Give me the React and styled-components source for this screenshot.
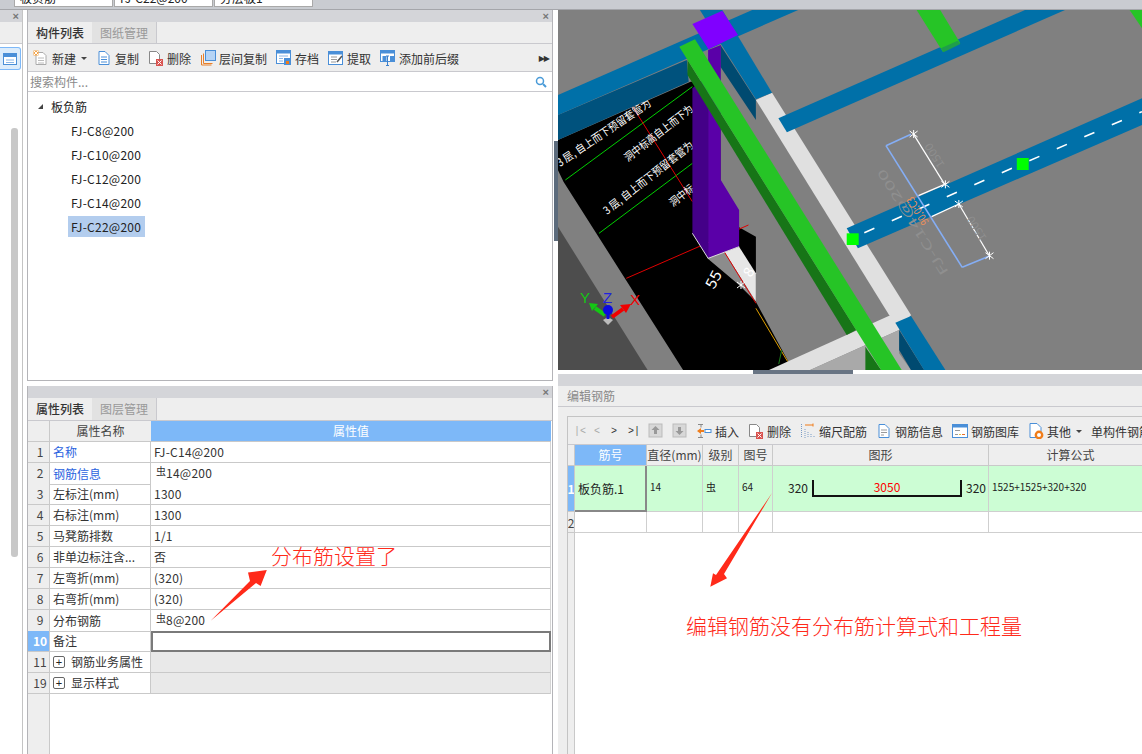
import React from "react";
import styled, { createGlobalStyle } from "styled-components";

const GlobalStyle = createGlobalStyle`
  html, body { margin: 0; padding: 0; background: #fff; }
  * { box-sizing: border-box; }
  body { font: 12px "Noto Sans CJK SC", "Liberation Sans", sans-serif; color: #222; }
`;

const Page = styled.div`
  position: relative;
  width: 1142px;
  height: 754px;
  overflow: hidden;
  display: flex;
  flex-direction: column;
`;

const TopBar = styled.div`
  height: 10px;
  flex: none;
  display: flex;
  gap: 1px;
  padding-left: 14px;
  background: #c9ccd1;
  border-bottom: 1px solid #a4a6aa;
`;
const TopCell = styled.div`
  width: 99px;
  height: 7px;
  background: #fff;
  border: 1px solid #a9a9a9;
  border-top: 0;
  padding-left: 5px;
  overflow: hidden;
  line-height: 1;
  font-size: 12px;
  > span { display: block; margin-top: -8px; }
`;

const Main = styled.div`
  flex: 1;
  min-height: 0;
  display: flex;
`;

const LeftStrip = styled.div`
  width: 23px;
  flex: none;
  border-right: 1px solid #c4c4c4;
  display: flex;
  flex-direction: column;
`;
const StripTools = styled.div`
  height: 22px;
  flex: none;
  background: #eee;
  border-bottom: 1px solid #c9c9ce;
`;
const StripButton = styled.div`
  width: 21px;
  height: 23px;
  margin-top: 3px;
  background: #dcecfb;
  border: 1px solid #7db8f8;
  border-left: 0;
  border-radius: 0 3px 3px 0;
  display: flex;
  align-items: center;
  justify-content: center;
`;
const StripThumb = styled.div`
  width: 7px;
  height: 429px;
  margin: 58px 0 0 11px;
  background: #c8c8c8;
  border-radius: 3px;
`;

const LeftColumn = styled.div`
  width: 526px;
  flex: none;
  margin-left: 4px;
  display: flex;
  flex-direction: column;
  gap: 5px;
`;
const Panel = styled.section`
  border: 1px solid #b4b4b8;
  border-top: 0;
  border-bottom: ${(p) => (p.$height ? "1px solid #b4b4b8" : "0")};
  display: flex;
  flex-direction: column;
  height: ${(p) => p.$height || "auto"};
  flex: ${(p) => (p.$height ? "none" : 1)};
  min-height: 0;
`;
const PanelHead = styled.div`
  height: 12px;
  flex: none;
  background: #d4d5d9;
  display: flex;
  align-items: center;
  justify-content: flex-end;
  padding-right: 3px;
  color: #777;
  font: bold 11px/12px "Liberation Sans", sans-serif;
`;
const Tabs = styled.div`
  height: ${(p) => p.$height || 22}px;
  flex: none;
  display: flex;
  background: #eee;
  border-bottom: 1px solid #c9c9ce;
`;
const Tab = styled.div`
  width: ${(p) => (p.$active ? 64 : 65)}px;
  text-align: center;
  line-height: 22px;
  color: ${(p) => (p.$active ? "#333" : "#999")};
  font-weight: ${(p) => (p.$active ? 500 : 400)};
  background: ${(p) => (p.$active ? "#eee" : "#e2e2e2")};
  border-right: ${(p) => (p.$active ? "0" : "1px solid #c9c9ce")};
`;

const Toolbar = styled.div`
  flex: none;
  height: ${(p) => p.$height}px;
  padding: 1px 0 0 ${(p) => p.$pad}px;
  background: #eee;
  display: flex;
  align-items: center;
  gap: ${(p) => p.$gap}px;
  white-space: nowrap;
  overflow: hidden;
  border-bottom: 1px solid #c9c9ce;
  > svg { flex: none; }
`;
const ToolItem = styled.div`
  display: flex;
  align-items: center;
  gap: 3px;
  flex: none;
  color: #333;
`;
const Caret = styled.i`
  width: 0;
  height: 0;
  margin-left: 2px;
  border: 3px solid transparent;
  border-top: 3px solid #444;
  border-bottom: 0;
`;
const More = styled.div`
  margin-left: auto;
  margin-right: 3px;
  font: 8px "DejaVu Sans", sans-serif;
  color: #333;
  letter-spacing: -1px;
`;

const Search = styled.div`
  height: 20px;
  flex: none;
  display: flex;
  align-items: center;
  justify-content: space-between;
  padding: 0 5px 0 2px;
  color: #8a8a8a;
  border-bottom: 1px solid #c9c9ce;
`;
const Tree = styled.div`
  flex: 1;
  padding-top: 2px;
  background: #fff;
`;
const TreeRoot = styled.div`
  height: 24px;
  display: flex;
  align-items: center;
  gap: 8px;
  padding-left: 10px;
  color: #222;
`;
const TreeArrow = styled.i`
  width: 0;
  height: 0;
  border-left: 5px solid transparent;
  border-bottom: 5px solid #444;
`;
const TreeItem = styled.div`
  height: 24px;
  padding-left: 40px;
  display: flex;
  align-items: center;
  > span {
    padding: 2px 4px 2px 3px;
    line-height: 17px;
    letter-spacing: 0.25px;
    background: ${(p) => (p.$selected ? "#b3cdee" : "transparent")};
  }
`;

const PropTable = styled.div`
  flex: 1;
  min-height: 0;
  display: flex;
  flex-direction: column;
  background: #fff;
`;
const PropRow = styled.div`
  display: grid;
  grid-template-columns: 22px 101px 400px;
  height: 21px;
  flex: none;
`;
const Num = styled.div`
  background: ${(p) => (p.$active ? "#7db8f8" : "#eee")};
  color: ${(p) => (p.$active ? "#fff" : "#444")};
  font-weight: ${(p) => (p.$active ? 700 : 400)};
  border-right: 1px solid #c9c9c9;
  border-bottom: 1px solid #c9c9c9;
  text-align: center;
  line-height: 20px;
  padding-left: 3px;
`;
const HeadCell = styled.div`
  text-align: center;
  line-height: 20px;
  background: ${(p) => (p.$blue ? "#7db8f8" : "#eee")};
  color: ${(p) => (p.$blue ? "#fff" : "#444")};
  border-bottom: 1px solid #c9c9c9;
`;
const NameCell = styled.div`
  padding-left: 3px;
  line-height: 20px;
  color: ${(p) => (p.$link ? "#2a63e0" : "#333")};
  border-right: 1px solid #c9c9c9;
  border-bottom: 1px solid #c9c9c9;
  white-space: nowrap;
  overflow: hidden;
  display: flex;
  align-items: center;
  gap: 6px;
`;
const ValueCell = styled.div`
  padding-left: 3px;
  line-height: 20px;
  letter-spacing: 0.25px;
  color: #333;
  border-right: 1px solid #d4d4d4;
  border-bottom: 1px solid #c9c9c9;
  background: ${(p) => (p.$group ? "#e9e9e9" : "#fff")};
  ${(p) => p.$current && "border: 2px solid #7a7a7a;"}
`;
const Expand = styled.i`
  width: 12px;
  height: 12px;
  flex: none;
  border: 1px solid #666;
  border-radius: 2px;
  font: normal 11px/10px "Liberation Sans", sans-serif;
  text-align: center;
  color: #222;
`;
const Grade = styled.span`
  font-size: 10px;
  position: relative;
  top: -3px;
  margin: 0 0 0 2px;
  letter-spacing: 0;
`;
const TableRest = styled.div`
  flex: 1;
  width: ${(p) => p.$width}px;
  background: #eee;
  border-right: 1px solid #c9c9c9;
`;

const RightColumn = styled.div`
  flex: 1;
  min-width: 0;
  margin-left: 5px;
  display: flex;
  flex-direction: column;
  position: relative;
`;
const Scene = styled.svg`
  display: block;
  flex: none;
  width: 584px;
  height: 360px;
  background: #808080;
`;
const VSplitHandle = styled.div`
  position: absolute;
  left: -4px;
  top: 131px;
  width: 4px;
  height: 100px;
  background: #5c6b7c;
`;
const HSplit = styled.div`
  height: 4px;
  flex: none;
  display: flex;
  justify-content: center;
  padding-right: 94px;
  background: #fff;
`;
const HSplitHandle = styled.div`
  width: 100px;
  background: #687484;
`;
const EditPanel = styled.section`
  flex: 1;
  min-height: 0;
  display: flex;
  flex-direction: column;
  background: #eee;
`;
const EditHead = styled.div`
  height: 12px;
  flex: none;
  background: #d4d5d9;
`;
const EditTitle = styled.div`
  height: 21px;
  flex: none;
  padding-left: 9px;
  line-height: 20px;
  color: #8a8a8a;
  background: #eee;
  border-bottom: 1px solid #c9c9ce;
`;
const EditBody = styled.div`
  flex: 1;
  min-height: 0;
  margin: 9px 0 0 9px;
  border-left: 1px solid #c4c4c4;
  border-top: 1px solid #c4c4c4;
  display: flex;
  flex-direction: column;
  overflow: hidden;
`;
const NavArrow = styled.span`
  font: 10px "Liberation Mono", monospace;
  color: ${(p) => (p.$dim ? "#aaa" : "#333")};
  width: ${(p) => p.$width || 7}px;
  margin-right: 1px;
  flex: none;
`;
const RebarRow = styled.div`
  display: grid;
  grid-template-columns: 7px 72px 56px 36px 34px 216px 164px;
  flex: none;
  height: ${(p) => p.$height}px;
  background: ${(p) => p.$bg || "#fff"};
`;
const RebarHead = styled.div`
  text-align: center;
  line-height: 20px;
  white-space: nowrap;
  overflow: hidden;
  color: ${(p) => (p.$blue ? "#fff" : "#444")};
  background: ${(p) => (p.$blue ? "#7db8f8" : "#eee")};
  border-right: 1px solid #c9c9c9;
  border-bottom: 1px solid #c9c9c9;
`;
const RebarNum = styled.div`
  background: ${(p) => (p.$active ? "#7db8f8" : "#eee")};
  color: ${(p) => (p.$active ? "#fff" : "#444")};
  font-weight: ${(p) => (p.$active ? 700 : 400)};
  border-right: 1px solid #c9c9c9;
  border-bottom: 1px solid #c9c9c9;
  display: flex;
  align-items: center;
  justify-content: center;
  overflow: hidden;
`;
const RebarCell = styled.div`
  border-right: ${(p) => (p.$current ? "2px solid #888" : "1px solid #cfcfcf")};
  border-bottom: ${(p) => (p.$current ? "2px solid #888" : "1px solid #cfcfcf")};
  padding: ${(p) => (p.$current ? "0 0 0 3px" : "0 0 4px 3px")};
  display: flex;
  align-items: center;
  white-space: nowrap;
  overflow: hidden;
  font-size: ${(p) => (p.$small ? 10 : 12)}px;
  color: #222;
`;
const ShapeCell = styled(RebarCell)`
  padding: 14px 0 0 15px;
  gap: 4px;
  align-items: flex-start;
  line-height: 16px;
`;
const ShapeBar = styled.div`
  width: 150px;
  height: 17px;
  border: 2px solid #111;
  border-top: 0;
  color: #f00;
  text-align: center;
  line-height: 14px;
`;
const RebarRest = styled.div`
  flex: 1;
  background: #fff;
`;
const RebarRestHead = styled.div`
  width: 7px;
  height: 100%;
  background: #eee;
  border-right: 1px solid #c9c9c9;
`;

const Arrows = styled.svg`
  position: absolute;
  left: 0;
  top: 0;
  width: 1142px;
  height: 754px;
  pointer-events: none;
`;
const Note = styled.div`
  position: absolute;
  left: ${(p) => p.$x}px;
  top: ${(p) => p.$y}px;
  font-size: 21px;
  line-height: 28px;
  color: #ff2a1a;
  white-space: nowrap;
  font-weight: 300;
`;

const Icon = ({ children, size = 16 }) => (
  <svg width={size} height="16" viewBox={`0 0 ${size} 16`} fill="none">
    {children}
  </svg>
);
const Doc = ({ stroke = "#4a8fd8" }) => (
  <path d="M3 1.5h6l4 4v9H3z" fill="#fff" stroke={stroke} />
);
const Lines = ({ color = "#4a8fd8" }) => (
  <path d="M5 7h6M5 9.5h6M5 12h6" stroke={color} />
);

const NewIcon = () => (
  <Icon>
    <path d="M3 2.5h7l3 3v9H3z" fill="#fff" stroke="#aaa" />
    <path d="M5 8h6M5 10.5h6M5 13h6" stroke="#bbb" />
    <rect x="0.5" y="0.5" width="5" height="5" fill="#f5a64a" />
    <path d="M1 1l4 4M5 1l-4 4" stroke="#fff" />
  </Icon>
);
const CopyIcon = () => (
  <Icon>
    <Doc />
    <Lines />
  </Icon>
);
const DeleteIcon = () => (
  <Icon>
    <path d="M1.5 1.5h7l3 3v9h-10z" fill="#fff" stroke="#888" />
    <rect x="8" y="9" width="7" height="7" fill="#d9534f" />
    <path d="M9.5 10.5l4 4M13.5 10.5l-4 4" stroke="#fff" />
  </Icon>
);
const LayerCopyIcon = () => (
  <Icon>
    <path d="M1.5 5v10h10" stroke="#e8802a" />
    <path d="M3.5 3.5v10h9" stroke="#e8802a" />
    <rect x="5.5" y="0.5" width="10" height="10" fill="#b6d4f5" stroke="#4a8fd8" />
  </Icon>
);
const ArchiveIcon = () => (
  <Icon>
    <rect x="0.5" y="0.5" width="14" height="13" fill="#fff" stroke="#4a8fd8" />
    <rect x="0.5" y="0.5" width="14" height="3" fill="#4a8fd8" />
    <path d="M3 6h9M3 8.5h4M3 11h4" stroke="#8ab6e6" />
    <rect x="8" y="8" width="7" height="7" fill="#4a8fd8" />
    <rect x="10" y="11" width="3" height="3" fill="#f07d1a" />
  </Icon>
);
const ExtractIcon = () => (
  <Icon>
    <rect x="0.5" y="1.5" width="14" height="13" fill="#fff" stroke="#4a8fd8" />
    <rect x="0.5" y="1.5" width="14" height="3" fill="#4a8fd8" />
    <path d="M3 7h6M3 9.5h6M3 12h5" stroke="#999" />
    <path d="M9 12l5-6" stroke="#555" strokeWidth="1.5" />
  </Icon>
);
const PrefixIcon = () => (
  <Icon>
    <rect x="0.5" y="0.5" width="14" height="11" fill="#fff" stroke="#4a8fd8" />
    <rect x="0.5" y="0.5" width="14" height="3" fill="#4a8fd8" />
    <rect x="2.5" y="6" width="4" height="5" fill="#4a8fd8" />
    <rect x="10" y="6" width="5" height="6" fill="#4a8fd8" />
    <path d="M6 6h3M7.5 6v9M6 15.5h3" stroke="#3c80cc" />
  </Icon>
);
const UpIcon = ({ down }) => (
  <Icon size={15}>
    <rect x="1" y="1" width="13" height="13" fill="#d8d8d8" stroke="#bbb" />
    <path
      d={down ? "M7.5 12l4-4H9V4H6v4H3.500z" : "M7.5 3l4 4H9v4H6V7H3.500z"}
      fill="#999"
    />
  </Icon>
);
const InsertIcon = () => (
  <Icon>
    <path d="M2 1.500h5M2 14.500h5M5 1.500v3M5 11.500v3" stroke="#888" />
    <path d="M1 8l4-3v2h3v2H5v2z" fill="#f07d1a" />
    <rect x="9" y="6.500" width="6" height="3" fill="#fff" stroke="#4a8fd8" />
  </Icon>
);
const ScaleIcon = () => (
  <Icon>
    <path d="M5 2h8M13 0.500v3" stroke="#f07d1a" />
    <path d="M1.500 1v14M5 6v9M8 9v6M11 11v4M14 13v2" stroke="#7a9cc6" strokeDasharray="1 1" />
  </Icon>
);
const InfoIcon = () => (
  <Icon>
    <Doc />
    <path d="M5 7h6M5 9.500h6M5 12h3" stroke="#999" />
  </Icon>
);
const LibraryIcon = () => (
  <Icon>
    <rect x="0.500" y="1.500" width="15" height="13" fill="#fff" stroke="#4a8fd8" />
    <rect x="0.500" y="1.500" width="15" height="3" fill="#4a8fd8" />
    <path d="M3 7.500h5M3 11.500h3" stroke="#999" />
    <path d="M7 11.500h2" stroke="#e8c23a" />
    <path d="M10 11.500h3" stroke="#e8702a" />
  </Icon>
);
const OtherIcon = () => (
  <Icon>
    <path d="M2 0.500h7l4 4v10H2z" fill="#fff" stroke="#4a8fd8" />
    <circle cx="11" cy="12" r="3.200" stroke="#f07d1a" strokeWidth="2.400" fill="#fff" />
  </Icon>
);

/* the reference was measured on zoomed crops, x and y scale differently */
const px = ([x, y]) => [556 + x * 0.3737, y / 3];
const pts = (list) =>
  list
    .map(px)
    .map((p) => p.map((n) => n.toFixed(1)).join(","))
    .join(" ");

const Poly = ({ p, fill }) => <polygon points={pts(p)} fill={fill} />;
const Line = ({ a, b, stroke, w = 1, dash }) => {
  const [x1, y1] = px(a);
  const [x2, y2] = px(b);
  return (
    <line x1={x1} y1={y1} x2={x2} y2={y2} stroke={stroke} strokeWidth={w} strokeDasharray={dash} />
  );
};
const Cross = ({ at }) => {
  const [x, y] = px(at);
  return (
    <path
      d={`M${x - 4} ${y - 3}L${x + 4} ${y + 3}M${x + 4} ${y - 3}L${x - 4} ${y + 3}M${x} ${y - 4}V${y + 4}`}
      stroke="#fff"
      strokeWidth="1"
    />
  );
};
const CadText = ({ x, y, angle, len, size = 11, fill = "#fff", children }) => (
  <text
    x={x}
    y={y}
    fontSize={size}
    fill={fill}
    fontFamily='"Noto Sans CJK SC", sans-serif'
    textLength={len}
    lengthAdjust="spacingAndGlyphs"
    transform={`rotate(${angle} ${x} ${y})`}
  >
    {children}
  </text>
);

const Scene3D = () => (
  <Scene viewBox="558 10 584 360">
    <Poly fill="#4d4d4d" p={[[5, 680], [245, 1110], [5, 1110]]} />
    <Poly
      fill="#000"
      p={[[5, 420], [360, 245], [440, 245], [440, 650], [535, 710], [535, 905], [622, 1085], [580, 1110], [340, 1110], [20, 545], [5, 510]]}
    />
    <Line a={[25, 540]} b={[365, 260]} stroke="#00d000" />
    <Line a={[115, 700]} b={[365, 490]} stroke="#00d000" />
    <Line a={[205, 320]} b={[365, 605]} stroke="#e00000" />
    <Line a={[188, 835]} b={[515, 675]} stroke="#e00000" />
    <CadText x={560} y={167} angle={-34} len={111}>3 层, 自上而下预留套管为</CadText>
    <CadText x={628} y={162} angle={-38} len={84}>洞中标高自上而下为</CadText>
    <CadText x={607} y={215} angle={-38} len={111}>3 层, 自上而下预留套管为</CadText>
    <CadText x={673} y={207} angle={-38} len={28}>洞中标</CadText>
    <Poly fill="#8c8c8c" p={[[405, 775], [450, 755], [535, 905], [490, 855]]} />
    <Poly fill="#e6e6e6" p={[[450, 755], [490, 740], [535, 820], [535, 905]]} />
    <Line a={[450, 755]} b={[535, 910]} stroke="#e00000" />
    <Line a={[535, 925]} b={[620, 1085]} stroke="#e0a000" />
    <Line a={[604, 1050]} b={[596, 1092]} stroke="#1a7a1a" />
    <CadText x={714} y={290} angle={-62} len={18} size={15}>55</CadText>
    <CadText x={751} y={278} angle={-60} len={8} size={14}>8</CadText>
    <Cross at={[495, 855]} />

    <Poly fill="#e0e0e0" p={[[535, 300], [578, 278], [950, 945], [905, 970]]} />
    <Poly fill="#e0e0e0" p={[[570, 1110], [890, 948], [950, 945], [918, 990], [680, 1110]]} />
    <Poly fill="#a9a9a9" p={[[680, 1110], [918, 990], [918, 1060], [950, 1110]]} />

    <Poly fill="#00527d" p={[[5, 345], [350, 180], [355, 245], [5, 420]]} />
    <Poly fill="#0070a8" p={[[5, 285], [525, 30], [648, 30], [5, 345]]} />
    <Poly fill="#004a70" p={[[440, 135], [535, 300], [535, 360], [440, 200]]} />
    <Poly fill="#0070a8" p={[[385, 30], [445, 30], [578, 278], [535, 298], [440, 130]]} />
    <Poly fill="#0070a8" p={[[595, 355], [1255, 30], [1362, 30], [618, 397]]} />
    <Poly fill="#004a70" p={[[918, 990], [985, 1110], [950, 1110], [918, 1050]]} />
    <Poly fill="#0070a8" p={[[908, 968], [950, 948], [1042, 1110], [985, 1110]]} />

    <Poly fill="#26c426" p={[[965, 30], [1028, 30], [1082, 130], [1035, 155]]} />
    <Poly fill="#1f9e4a" p={[[1030, 145], [1075, 122], [1082, 132], [1037, 157]]} />
    <Poly fill="#26c426" p={[[1535, 30], [1568, 30], [1568, 85]]} />

    <Poly fill="#440088" p={[[365, 265], [407, 225], [407, 775], [365, 700]]} />
    <Poly fill="#5a00a8" p={[[407, 150], [441, 135], [441, 540], [490, 630], [490, 740], [407, 775]]} />
    <Poly fill="#8000ff" p={[[365, 72], [445, 32], [487, 105], [408, 148]]} />
    <Line a={[365, 700]} b={[407, 775]} stroke="#ddd" />
    <Line a={[407, 775]} b={[490, 740]} stroke="#ddd" />

    <Poly fill="#177517" p={[[352, 180], [352, 225], [778, 1005], [803, 990]]} />
    <Poly fill="#177517" p={[[828, 1040], [828, 1110], [870, 1110]]} />
    <Poly fill="#26c426" p={[[330, 140], [372, 118], [925, 1110], [870, 1110]]} />

    <Poly fill="#0070a8" p={[[778, 685], [1568, 295], [1568, 375], [808, 745]]} />
    <Line a={[825, 698]} b={[1568, 335]} stroke="#fff" w={1.6} dash="11 19" />
    <Poly fill="#00ff00" p={[[778, 700], [810, 700], [810, 735], [778, 735]]} />
    <Poly fill="#00ff00" p={[[1233, 474], [1265, 474], [1265, 510], [1233, 510]]} />

    <Line a={[957, 403]} b={[1040, 553]} stroke="#fff" w={1.2} />
    <Line a={[1040, 553]} b={[970, 587]} stroke="#fff" w={1.2} />
    <Line a={[1078, 612]} b={[1160, 768]} stroke="#fff" w={1.2} />
    <Line a={[1078, 612]} b={[1005, 650]} stroke="#fff" w={1.2} />
    <Line a={[883, 437]} b={[950, 403]} stroke="#85aef5" w={1.6} />
    <Line a={[883, 437]} b={[1087, 802]} stroke="#85aef5" w={1.6} />
    <Line a={[1087, 802]} b={[1160, 768]} stroke="#85aef5" w={1.6} />
    <Cross at={[957, 402]} />
    <Cross at={[1042, 553]} />
    <Cross at={[1078, 612]} />
    <Cross at={[1160, 767]} />
    <CadText x={949} y={272} angle={-122} len={123} size={12} fill="#8f8f8f">FJ-C14@200</CadText>
    <CadText x={929} y={222} angle={-122} len={31} size={11} fill="#f0905a">90.0:C3</CadText>
    <CadText x={945} y={165} angle={-122} len={27} size={11} fill="#8f8f8f">1500</CadText>
    <CadText x={987} y={238} angle={-122} len={27} size={11} fill="#8f8f8f">1500</CadText>

    <path d="M603 320l5-3 5 3-5 5z" fill="#bbb" />
    <path d="M605 315l-10-7" stroke="#14c814" strokeWidth="4" />
    <path d="M589 303l9 1-6 7z" fill="#14c814" />
    <path d="M612 317l11-8" stroke="#f00000" strokeWidth="4" />
    <path d="M631 304l-11 1 6 8z" fill="#f00000" />
    <path d="M608 310v9" stroke="#0a0ae0" strokeWidth="3" />
    <ellipse cx="608" cy="310" rx="5" ry="5" fill="#0a0ae0" />
    <text x="580" y="303" fontSize="15" fill="#14c814" fontFamily='"Liberation Sans", sans-serif'>Y</text>
    <text x="603" y="303" fontSize="15" fill="#2020e0" fontFamily='"Liberation Sans", sans-serif'>Z</text>
    <text x="630" y="305" fontSize="15" fill="#f00000" fontFamily='"Liberation Sans", sans-serif'>X</text>
  </Scene>
);

const items = ["FJ-C8@200", "FJ-C10@200", "FJ-C12@200", "FJ-C14@200", "FJ-C22@200"];

const props = [
  { n: 1, name: "名称", value: "FJ-C14@200", link: true },
  { n: 2, name: "钢筋信息", grade: true, value: "14@200", link: true },
  { n: 3, name: "左标注(mm)", value: "1300" },
  { n: 4, name: "右标注(mm)", value: "1300" },
  { n: 5, name: "马凳筋排数", value: "1/1" },
  { n: 6, name: "非单边标注含...", value: "否" },
  { n: 7, name: "左弯折(mm)", value: "(320)" },
  { n: 8, name: "右弯折(mm)", value: "(320)" },
  { n: 9, name: "分布钢筋", grade: true, value: "8@200" },
];

export default function App() {
  return (
    <Page>
      <GlobalStyle />
      <TopBar>
        <TopCell><span>板负筋</span></TopCell>
        <TopCell><span>FJ-C22@200</span></TopCell>
        <TopCell><span>分层板1</span></TopCell>
      </TopBar>
      <Main>
        <LeftStrip>
          <PanelHead>×</PanelHead>
          <StripTools />
          <StripButton>
            <svg width="14" height="12" viewBox="0 0 14 12">
              <rect x="0.500" y="0.500" width="13" height="11" fill="#fff" stroke="#4a8fd8" />
              <rect x="0.500" y="0.500" width="13" height="3.500" fill="#4a8fd8" />
              <path d="M3 7h8M3 9.500h8" stroke="#8ab6e6" />
            </svg>
          </StripButton>
          <StripThumb />
        </LeftStrip>
        <LeftColumn>
          <Panel $height="371px">
            <PanelHead>×</PanelHead>
            <Tabs>
              <Tab $active>构件列表</Tab>
              <Tab>图纸管理</Tab>
            </Tabs>
            <Toolbar $height={28} $pad={5} $gap={9}>
              <ToolItem><NewIcon />新建<Caret /></ToolItem>
              <ToolItem><CopyIcon />复制</ToolItem>
              <ToolItem><DeleteIcon />删除</ToolItem>
              <ToolItem><LayerCopyIcon />层间复制</ToolItem>
              <ToolItem><ArchiveIcon />存档</ToolItem>
              <ToolItem><ExtractIcon />提取</ToolItem>
              <ToolItem><PrefixIcon />添加前后缀</ToolItem>
              <More>▶▶</More>
            </Toolbar>
            <Search>
              搜索构件...
              <svg width="12" height="12" viewBox="0 0 12 12" fill="none">
                <circle cx="5" cy="5" r="3.500" stroke="#4a9bd8" strokeWidth="1.500" />
                <path d="M8 8l3 3" stroke="#4a9bd8" strokeWidth="2" />
              </svg>
            </Search>
            <Tree>
              <TreeRoot><TreeArrow />板负筋</TreeRoot>
              {items.map((item, i) => (
                <TreeItem key={item} $selected={i === 4}>
                  <span>{item}</span>
                </TreeItem>
              ))}
            </Tree>
          </Panel>
          <Panel>
            <PanelHead>×</PanelHead>
            <Tabs $height={23}>
              <Tab $active>属性列表</Tab>
              <Tab>图层管理</Tab>
            </Tabs>
            <PropTable>
              <PropRow>
                <Num />
                <HeadCell>属性名称</HeadCell>
                <HeadCell $blue>属性值</HeadCell>
              </PropRow>
              {props.map((row) => (
                <PropRow key={row.n}>
                  <Num>{row.n}</Num>
                  <NameCell $link={row.link}>{row.name}</NameCell>
                  <ValueCell>
                    {row.grade && <Grade>虫</Grade>}
                    {row.value}
                  </ValueCell>
                </PropRow>
              ))}
              <PropRow>
                <Num $active>10</Num>
                <NameCell>备注</NameCell>
                <ValueCell $current />
              </PropRow>
              <PropRow>
                <Num>11</Num>
                <NameCell><Expand>+</Expand>钢筋业务属性</NameCell>
                <ValueCell $group />
              </PropRow>
              <PropRow>
                <Num>19</Num>
                <NameCell><Expand>+</Expand>显示样式</NameCell>
                <ValueCell $group />
              </PropRow>
              <TableRest $width={22} />
            </PropTable>
          </Panel>
        </LeftColumn>
        <RightColumn>
          <VSplitHandle />
          <Scene3D />
          <HSplit><HSplitHandle /></HSplit>
          <EditPanel>
            <EditHead />
            <EditTitle>编辑钢筋</EditTitle>
            <EditBody>
              <Toolbar $height={28} $pad={6} $gap={9}>
                <NavArrow $dim $width={10}>|&lt;</NavArrow>
                <NavArrow $dim>&lt;</NavArrow>
                <NavArrow>&gt;</NavArrow>
                <NavArrow $width={10}>&gt;|</NavArrow>
                <UpIcon />
                <UpIcon down />
                <ToolItem><InsertIcon />插入</ToolItem>
                <ToolItem><DeleteIcon />删除</ToolItem>
                <ToolItem><ScaleIcon />缩尺配筋</ToolItem>
                <ToolItem><InfoIcon />钢筋信息</ToolItem>
                <ToolItem><LibraryIcon />钢筋图库</ToolItem>
                <ToolItem><OtherIcon />其他<Caret /></ToolItem>
                <ToolItem>单构件钢筋</ToolItem>
              </Toolbar>
              <RebarRow $height={21}>
                <RebarHead />
                <RebarHead $blue>筋号</RebarHead>
                <RebarHead>直径(mm)</RebarHead>
                <RebarHead>级别</RebarHead>
                <RebarHead>图号</RebarHead>
                <RebarHead>图形</RebarHead>
                <RebarHead>计算公式</RebarHead>
              </RebarRow>
              <RebarRow $height={46} $bg="#ccfdd4">
                <RebarNum $active>1</RebarNum>
                <RebarCell $current>板负筋.1</RebarCell>
                <RebarCell $small>14</RebarCell>
                <RebarCell $small>虫</RebarCell>
                <RebarCell $small>64</RebarCell>
                <ShapeCell>
                  <span>320</span>
                  <ShapeBar>3050</ShapeBar>
                  <span>320</span>
                </ShapeCell>
                <RebarCell $small>1525+1525+320+320</RebarCell>
              </RebarRow>
              <RebarRow $height={21}>
                <RebarNum>2</RebarNum>
                <RebarCell />
                <RebarCell />
                <RebarCell />
                <RebarCell />
                <RebarCell />
                <RebarCell />
              </RebarRow>
              <RebarRest><RebarRestHead /></RebarRest>
            </EditBody>
          </EditPanel>
        </RightColumn>
      </Main>
      <Note $x={271} $y={541}>分布筋设置了</Note>
      <Note $x={686} $y={611}>编辑钢筋没有分布筋计算式和工程量</Note>
      <Arrows viewBox="0 0 1142 754">
        <polygon points="210.700,620.700 250,581 248,572.500 266.800,570 260.600,586 256,583" fill="#ff2a1a" />
        <polygon points="772,493 724,574 727,578.300 710.300,586.700 713,573.300 716,575" fill="#ff2a1a" />
      </Arrows>
    </Page>
  );
}
